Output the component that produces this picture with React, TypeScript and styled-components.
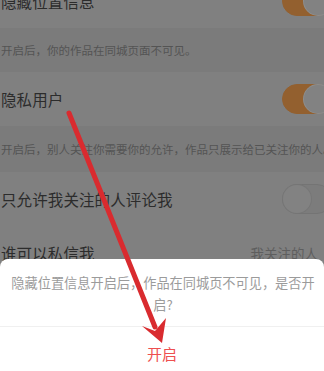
import styled, { createGlobalStyle } from "styled-components";

const GlobalStyle = createGlobalStyle`
  html, body {
    margin: 0;
    padding: 0;
  }
  body {
    font-family: "Noto Sans CJK SC", "Noto Sans", sans-serif;
  }
`;

const Screen = styled.div`
  position: relative;
  width: 324px;
  height: 371px;
  overflow: hidden;
  background: #7f7f7f;
`;

const SettingsList = styled.div`
  display: flex;
  flex-direction: column;
  margin-top: -26px;
`;

const SettingRow = styled.div`
  display: flex;
  align-items: center;
  justify-content: space-between;
  height: 54px;
  padding-left: 1px;
  background: #808080;
`;

const RowTitle = styled.span`
  font-size: 15.5px;
  color: #2c2c2c;
  letter-spacing: 0.1px;
`;

const RowValue = styled.span`
  font-size: 13.5px;
  color: #5e5e5e;
  margin-right: 6px;
`;

const Description = styled.div<{ $height: number }>`
  display: flex;
  align-items: center;
  height: ${(p) => p.$height}px;
  padding-left: 1px;
  background: #7b7b7b;
  font-size: 11.5px;
  color: #545454;
  white-space: nowrap;
`;

const Toggle = styled.div<{ $on: boolean }>`
  position: relative;
  flex-shrink: 0;
  width: 50px;
  height: 30px;
  margin-right: -8px;
  border-radius: 15px;
  box-sizing: border-box;
  background: ${(p) => (p.$on ? "#93602f" : "#7c7c7c")};
  border: 1px solid ${(p) => (p.$on ? "#93602f" : "#747474")};
`;

const Knob = styled.div<{ $on: boolean }>`
  position: absolute;
  top: 0;
  ${(p) => (p.$on ? "right: -1px;" : "left: 0;")}
  width: 28px;
  height: 28px;
  border-radius: 50%;
  background: #828282;
  box-shadow: 0 0 0 1px ${(p) => (p.$on ? "#8d8d8d" : "#767676")};
`;

const Sheet = styled.div`
  position: absolute;
  left: 0;
  right: 0;
  top: 259px;
  bottom: -10px;
  background: #ffffff;
  border-radius: 8px 8px 0 0;
  display: flex;
  flex-direction: column;
`;

const SheetMessage = styled.div`
  padding: 13px 8px 10px 10px;
  font-size: 13.2px;
  line-height: 22px;
  color: #9b9b9b;
  text-align: center;
`;

const SheetDivider = styled.div`
  height: 1px;
  background: #f0f0f0;
`;

const SheetButton = styled.div`
  height: 52px;
  display: flex;
  align-items: center;
  justify-content: center;
  font-size: 15px;
  color: #ee4f4f;
`;

const ArrowLayer = styled.svg`
  position: absolute;
  left: 0;
  top: 0;
  width: 324px;
  height: 371px;
  pointer-events: none;
`;

export default function App() {
  return (
    <>
      <GlobalStyle />
      <Screen>
        <SettingsList>
          <SettingRow>
            <RowTitle>隐藏位置信息</RowTitle>
            <Toggle $on>
              <Knob $on />
            </Toggle>
          </SettingRow>
          <Description $height={44}>开启后，你的作品在同城页面不可见。</Description>
          <SettingRow>
            <RowTitle>隐私用户</RowTitle>
            <Toggle $on>
              <Knob $on />
            </Toggle>
          </SettingRow>
          <Description $height={46}>
            开启后，别人关注你需要你的允许，作品只展示给已关注你的人。
          </Description>
          <SettingRow>
            <RowTitle>只允许我关注的人评论我</RowTitle>
            <Toggle $on={false}>
              <Knob $on={false} />
            </Toggle>
          </SettingRow>
          <SettingRow>
            <RowTitle>谁可以私信我</RowTitle>
            <RowValue>我关注的人</RowValue>
          </SettingRow>
        </SettingsList>

        <Sheet>
          <SheetMessage>隐藏位置信息开启后，作品在同城页不可见，是否开启?</SheetMessage>
          <SheetDivider />
          <SheetButton>开启</SheetButton>
        </Sheet>

        <ArrowLayer viewBox="0 0 324 371">
          <line
            x1="69"
            y1="113"
            x2="155"
            y2="327"
            stroke="#d92b2f"
            strokeWidth="5"
            strokeLinecap="round"
          />
          <polygon points="162,343 142,326 155,331 166,318" fill="#d92b2f" />
        </ArrowLayer>
      </Screen>
    </>
  );
}
